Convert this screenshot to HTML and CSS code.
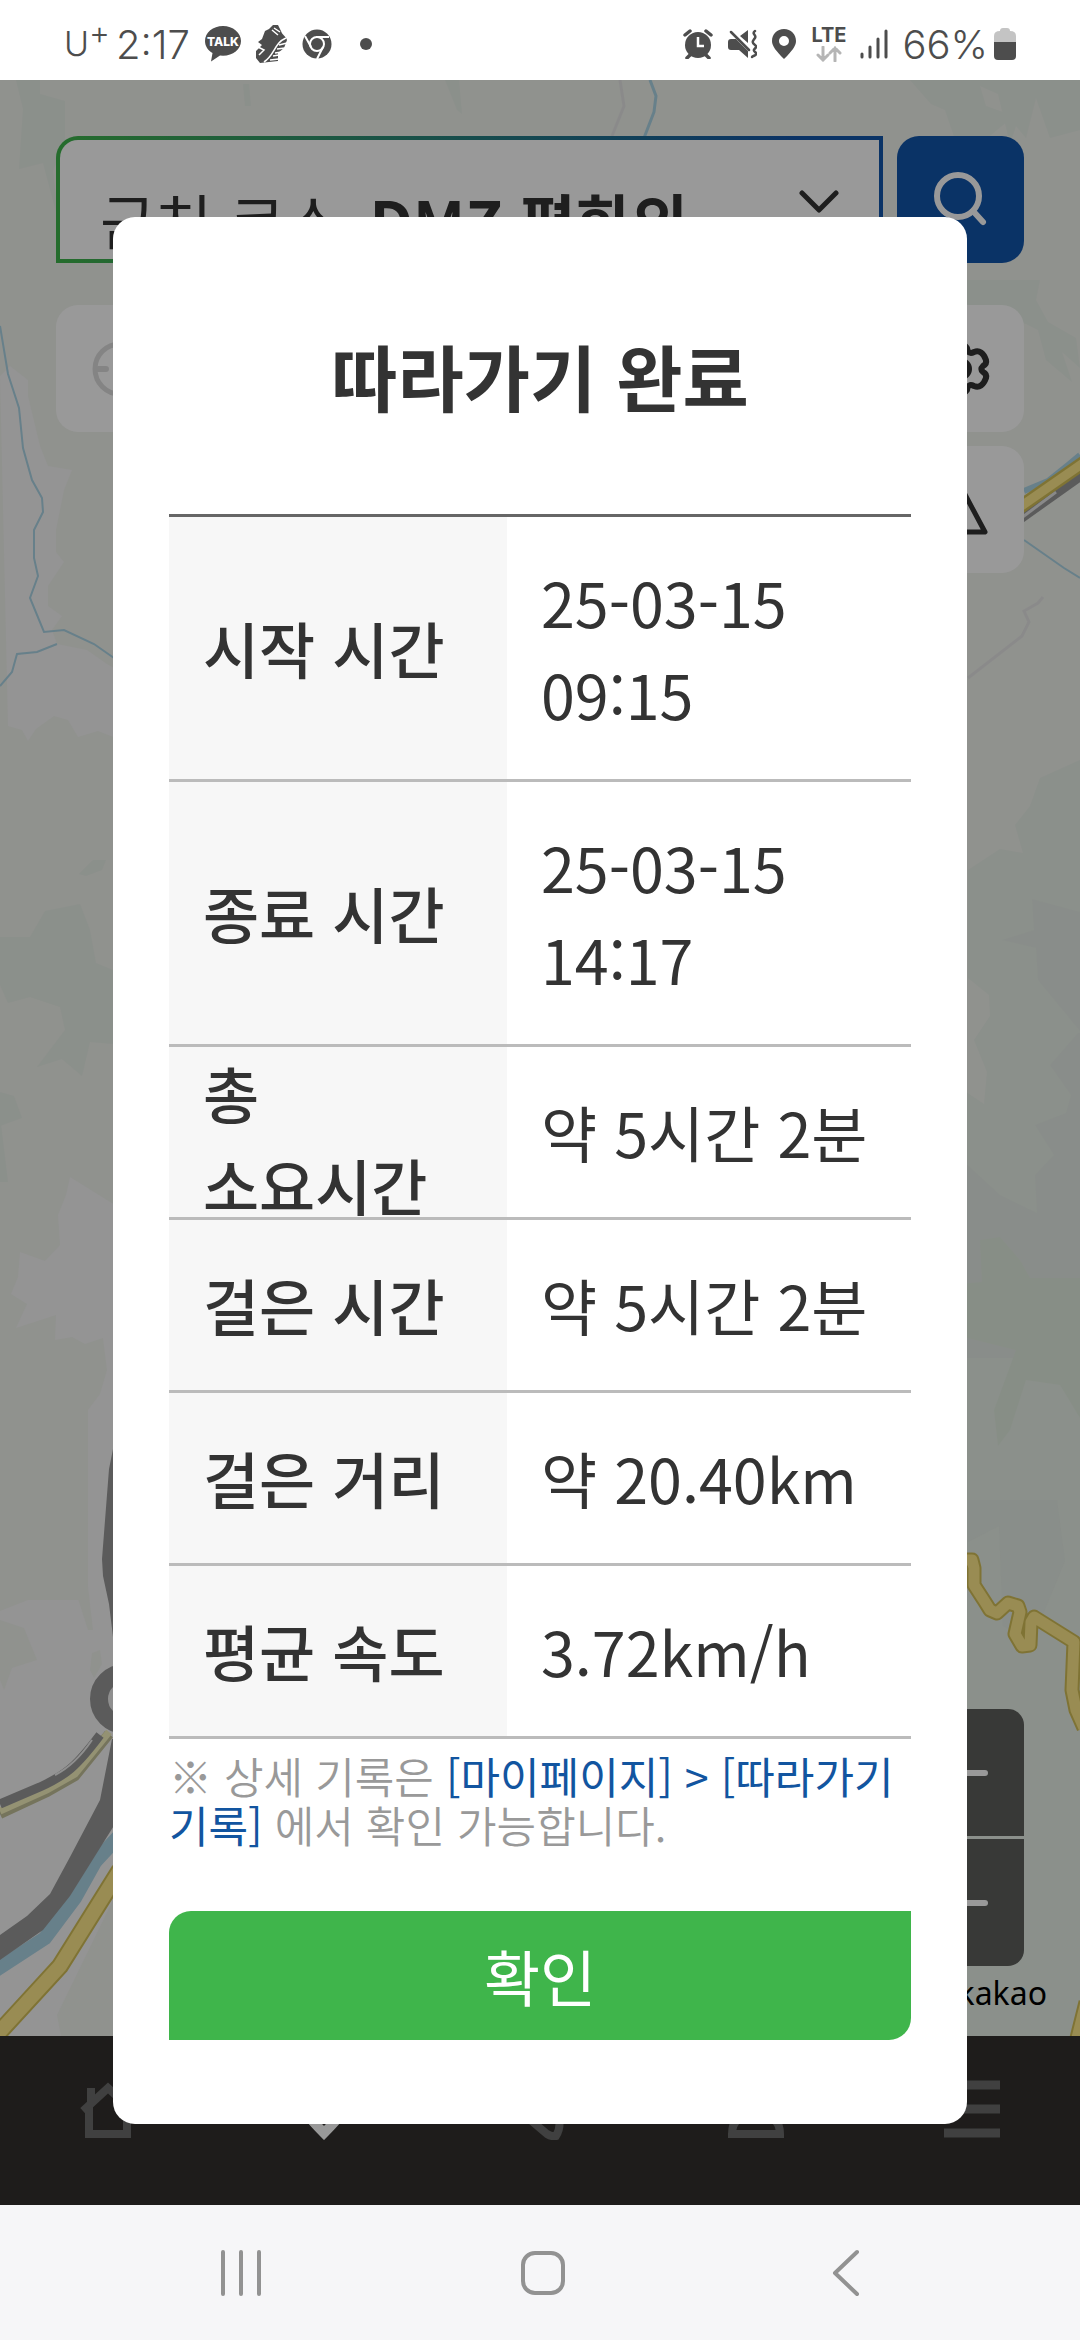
FILE: index.html
```html
<!DOCTYPE html>
<html lang="ko">

<head>
    <meta charset="UTF-8">
    <meta name="viewport" content="width=device-width, initial-scale=1.0">
    <title>따라가기 완료</title>
    <link rel="stylesheet" href="styles.css">
</head>

<body>
    <header class="status-bar">
        <div class="status-left">
            <span class="carrier">U<sup>+</sup></span>
            <span class="clock">2:17</span>
            <svg viewBox="0 0 38 38" width="38" height="38">
                <path d="M19 1C9 1 1 7.500 1 16c0 5 3 9.500 7.500 12L7 36.500 16 30.500l3 .2c10 0 18-6.500 18-14.700S29 1 19 1z" fill="#4d4d4d" />
                <text class="talk-text" x="19" y="21" text-anchor="middle">TALK</text>
            </svg>
            <svg viewBox="0 0 32 40" width="32" height="40">
                <path d="M13 5l4-4 5 0 3 6c1 4 5 5 6 9l-3 8-6 5 0 8-18 2-4-5 0-7 6-6-4-3 4-3 3-8z" fill="#4d4d4d" />
                <path d="M30 14c-12 5-11 17-22 24M23 21l8-2M21 25l8-1M19 29l7-1M17 32l6-1M14 36l9-1M16 6l6 5M18 4l6 4M2 23l6 3-5 5" stroke="#fff" stroke-width="1.500" fill="none" />
            </svg>
            <svg viewBox="0 0 30 30" width="30" height="30">
                <circle cx="15" cy="15" r="14.500" fill="#4d4d4d" />
                <circle cx="15" cy="15" r="7" fill="#4d4d4d" stroke="#fff" stroke-width="2" />
                <path d="M14 8h13M9 18L3 7M21 18l-6 12" stroke="#fff" stroke-width="2" fill="none" />
            </svg>
            <span class="more-dot"></span>
        </div>
        <div class="status-right">
            <svg viewBox="0 0 30 30" width="30" height="30">
                <circle cx="15" cy="16" r="13" fill="#4d4d4d" />
                <path d="M2 6l5-4M28 6l-5-4M4 29l4-4M26 29l-4-4" stroke="#4d4d4d" stroke-width="3.500" stroke-linecap="round" />
                <path d="M15 8v9h6" stroke="#fff" stroke-width="2.500" fill="none" />
            </svg>
            <svg viewBox="0 0 30 30" width="30" height="30">
                <path d="M1 13q0-3 3-3h5l12 12v7l-9-8H4q-3 0-3-3zM13 7l8-6v13z" fill="#4d4d4d" />
                <path d="M4 3l18 18M28 2c-4 3 2 4 0 7s-4 4 0 7-4 4 0 7-3 4-3 5" stroke="#4d4d4d" stroke-width="2.500" fill="none" stroke-linecap="round" />
            </svg>
            <svg viewBox="0 0 26 32" width="26" height="32">
                <path d="M13 1C6 1 1 6 1 13c0 5 4 10 12 18 8-8 12-13 12-18C25 6 20 1 13 1zm0 7a5 5 0 1 1 0 10 5 5 0 0 1 0-10z" fill="#4d4d4d" fill-rule="evenodd" />
            </svg>
            <div class="network">
                <span>LTE</span>
                <svg viewBox="0 0 26 16" width="26" height="16">
                    <path d="M7 1v13M2 9l5 5 5-5M19 15V2M14 7l5-5 5 5" stroke="#b5b5b5" stroke-width="3" fill="none" stroke-linecap="round" />
                </svg>
            </div>
            <svg viewBox="0 0 28 30" width="28" height="30">
                <path d="M2 25v3M10 18v10M18 10v18M26 2v26" stroke="#4d4d4d" stroke-width="3" stroke-linecap="round" />
            </svg>
            <div class="battery">
                <span>66%</span>
                <svg viewBox="0 0 22 32" width="22" height="32">
                    <path d="M6 3q0-3 3-3h4q3 0 3 3 6 0 6 5v7H0V8q0-5 6-5z" fill="#c4c4c4" />
                    <path d="M0 14h22v14q0 4-4 4H4q-4 0-4-4z" fill="#4d4d4d" />
                </svg>
            </div>
        </div>
    </header>

    <main class="app">
        <section class="map-view">
            <svg class="map" viewBox="0 80 1080 1956" preserveAspectRatio="xMidYMid slice">
                <rect y="80" width="1080" height="1956" fill="#f0f3ed" />
                <!-- Flat land -->
                <g fill="#f7f7f7">
                    <path d="M0 376l10-10 18 14v16l12 50 8 20 24 4-8 20-8 40 0 22 8 10-16 24 0 20 14 10-10 14 5 14 30 6 20 14 14 8V740l-23-9-20 6-10-17-14-4-18 13-8 12-6-11-14-4z" />
                    <path d="M70 1177l-4 18-8 20 2 30-15 16-25-9-2 25-7 17 16 10-11 24 40-13-1 25 17-3 13 7 18-6 4 32-7 24-12 16v626h60V1230l-25-20z" />
                    <path d="M0 1600h100v436H0z" />
                </g>
                <path d="M0 1395h88v115l-2 60 7 60h-5l-16-50-14-78-30-9 5 25-5 22 3 30-3 30-28 11zM0 1620l24 8 13 32-25 8-8 22-4-10zM113 1900l-56 115 4 21h60zM92 1653l8-3 2 14-8 14-4-8z" fill="#f0f3ed" />
                <!-- Forest -->
                <g fill="#e8f0e8">
                    <path d="M16 80h24v14l25 7 0 40-12 30 6 52-16-60-24 6 4-60zM243 84l6 0 2 22-6 0zM445 80l12 30 5 4-3-34zM910 80h170v50l-30 8-14-40-10 40-10-12-6 18-12-50-18-8 6 20 28 10-34 28-20 10-15-44-14-6z" />
                    <path d="M960 280h80l-4 20 12 22 28 16 4 30-18-16 10 30-26-22-8-30-12-6-60-20z" />
                    <path d="M0 937h30l15-26 35-7 10 26 6 33 17 7v74l-23-2-8 34-20-17-25 8 28-37-5-23-30-10-22 6-8-18zM79 874l14-14 13 0-4 10-16 6zM0 1092l14 4 8 22-22 8v-10l8 66-8 0z" />
                    <path d="M1080 760l-40 18-10 28-15 19 8 28-23-4-32 21v108l21 17 1 21-16 24 13 32-3 32-24-16v948h120z" />
                </g>
                <path d="M1032 899l48 13v119l-42-51-2-32-34-8 32-10zM1078 1033l-28 32 21 30-5 18-31 12 19 30-19 20 2 38-37-18-40-37v200h120v-325z" fill="#e5ece6" />
                <path d="M982 1282l-2-42 20-3 20 23 10 18h50v140l-20-33-34-5-16 50-12 16-4-36 22-60-56-14v-52z" fill="#e2ede0" />
                <path d="M968 1542l31-16 4 100 29 15 33-80-8-61h-89z" fill="#e2e9e3" opacity=".5" />
                <!-- Streams -->
                <g fill="none" stroke="#acd5e6" stroke-width="2">
                    <path d="M0 326l8 48 11 34 4 40 9 32 10 18 1 14-9 18 0 28 4 18-8 22 14 34 20-2 30 14 20 14" />
                    <path d="M0 686l12-14 5-18 20-2 20-8" />
                    <path d="M650 80l6 16-2 16-10 26" stroke-width="3" />
                    <path d="M1024 540l40 28 16 10" />
                    <path d="M1024 491l24-10 20-16 12-10" stroke-width="6" />
                </g>
                <path d="M620 80l4 26-12 30M968 678l54-42 7-14-5-11 14-8 5-6" fill="none" stroke="#e7e7e7" stroke-width="3" />
                <!-- Roads, right side -->
                <path d="M1010 524l76-54" stroke="#989898" stroke-width="13" />
                <path d="M1016 522l40-30" stroke="#e4e4e4" stroke-width="3" />
                <path d="M1010 514l76-53" stroke="#d4c058" stroke-width="14" />
                <path d="M1010 514l76-53" stroke="#ffe98a" stroke-width="9" />
                <path d="M960 1560h12l2 8v17l11 17 5 8 7 3 11-10 10 3 2 6-5 22 7 12 8-1 1-23 3-5 40 25-2 48 4 20 8 18M1076 2042l10-40" fill="none" stroke="#d4c058" stroke-width="15" stroke-linejoin="round" />
                <path d="M960 1560h12l2 8v17l11 17 5 8 7 3 11-10 10 3 2 6-5 22 7 12 8-1 1-23 3-5 40 25-2 48 4 20 8 18M1076 2042l10-40" fill="none" stroke="#ffe98a" stroke-width="11" stroke-linejoin="round" />
                <!-- Roads, left side -->
                <path d="M-4 1970l49-32 30-40 20-36 24-26" fill="none" stroke="#acd5e6" stroke-width="14" />
                <path d="M120 1430l-7 19-4 20-7 90 1 17 6 28 4 33v102l-1 0-12 61-30 57-20 37-23 22-27 19v25l43-30 27-34 50-80v-386z" fill="#989898" />
                <path d="M0 1814l47-22 28-16 34-42" fill="none" stroke="#c4c19a" stroke-width="10" />
                <path d="M0 1811l47-21 28-16 34-42" fill="none" stroke="#f7f4c0" stroke-width="7" />
                <path d="M0 1804l40-17c26-12 36-20 60-52" fill="none" stroke="#989898" stroke-width="9" />
                <path d="M55 1775q20-10 37-35" fill="none" stroke="#eee" stroke-width="2" />
                <circle cx="125" cy="1699" r="26" fill="#eee" stroke="#989898" stroke-width="18" />
                <path d="M-6 2038l66-72 60-96" fill="none" stroke="#d4c058" stroke-width="18" />
                <path d="M-6 2038l66-72 60-96" fill="none" stroke="#ffe98a" stroke-width="14" />
            </svg>

            <div class="controls">
                <div class="search-row">
                    <div class="course-box">
                        <label class="course-label" for="course">근처 코스</label>
                        <select class="course-select" id="course">
                            <option>DMZ 평화의</option>
                        </select>
                        <svg class="chevron" viewBox="0 0 40 24" width="40" height="24">
                            <path d="M3 3l17 17L37 3" stroke="#333" stroke-width="5" fill="none" stroke-linecap="round" stroke-linejoin="round" />
                        </svg>
                    </div>
                    <button class="square search-button" aria-label="검색">
                        <svg viewBox="0 0 60 60" width="60" height="60">
                            <circle cx="27" cy="26" r="21" fill="none" stroke="#fff" stroke-width="6" />
                            <path d="M42 41l10 11" stroke="#fff" stroke-width="6" stroke-linecap="round" />
                        </svg>
                    </button>
                </div>
                <div class="tool-row">
                    <button class="square" aria-label="현재 위치" disabled>
                        <svg viewBox="0 0 60 60" width="60" height="60">
                            <circle cx="30" cy="30" r="25" fill="none" stroke="#ddd" stroke-width="5" />
                            <path d="M8 30h8M44 30h8M30 8v8M30 44v8" stroke="#ddd" stroke-width="6" stroke-linecap="round" />
                        </svg>
                    </button>
                    <button class="square" aria-label="설정">
                        <svg viewBox="0 0 60 60" width="60" height="60">
                            <path d="M24 9q6-8 12 0 1 7 7 4 8-3 12 8 1 4-3 6-3 3 0 6 4 2 3 6-4 11-12 8-6-3-7 4-6 8-12 0-1-7-7-4-8 3-12-8-1-4 3-6 3-3 0-6-4-2-3-6 4-11 12-8 6 3 7-4z" fill="none" stroke="#333" stroke-width="6" stroke-linejoin="round" />
                            <circle cx="30" cy="30" r="8" fill="none" stroke="#333" stroke-width="6" />
                        </svg>
                    </button>
                </div>
                <button class="square warning-button" aria-label="위험 신고">
                    <svg viewBox="0 0 60 60" width="60" height="60">
                        <path d="M30 7L54 52H6z" fill="none" stroke="#333" stroke-width="5" stroke-linejoin="round" />
                        <path d="M30 22v14M30 43v1" stroke="#333" stroke-width="5" stroke-linecap="round" />
                    </svg>
                </button>
                <div class="zoom">
                    <button class="zoom-button" aria-label="확대">
                        <svg viewBox="0 0 54 54" width="54" height="54">
                            <path d="M3 27h48M27 3v48" stroke="#fff" stroke-width="6" stroke-linecap="round" />
                        </svg>
                    </button>
                    <button class="zoom-button" aria-label="축소">
                        <svg viewBox="0 0 54 54" width="54" height="54">
                            <path d="M3 27h48" stroke="#fff" stroke-width="6" stroke-linecap="round" />
                        </svg>
                    </button>
                </div>
            </div>
            <div class="copyright">kakao</div>
        </section>

        <nav class="tab-bar">
            <a class="tab" href="#" aria-label="홈">
                <svg viewBox="0 0 60 60" width="60" height="60">
                    <path d="M11 26v28h38V26M5 31L30 8l25 23M13 25V8" fill="none" stroke="#6b6b6b" stroke-width="8" />
                </svg>
            </a>
            <a class="tab" href="#" aria-label="지도">
                <svg viewBox="0 0 60 60" width="60" height="60">
                    <path d="M30 53C16 39 9 31 9 21a21 17 0 0 1 42 0c0 10-7 18-21 32z" fill="none" stroke="#fff" stroke-width="10" />
                </svg>
            </a>
            <a class="tab" href="#" aria-label="기록">
                <svg viewBox="0 0 60 60" width="60" height="60">
                    <path d="M4 26L37 54q5 3 9 2 5-8 3-18L20 10z" fill="none" stroke="#6b6b6b" stroke-width="8" />
                </svg>
            </a>
            <a class="tab" href="#" aria-label="마이페이지">
                <svg viewBox="0 0 60 60" width="60" height="60">
                    <circle cx="30" cy="15" r="11" fill="none" stroke="#6b6b6b" stroke-width="7" />
                    <path d="M6 54q0-20 24-20t24 20z" fill="none" stroke="#6b6b6b" stroke-width="8" />
                </svg>
            </a>
            <a class="tab" href="#" aria-label="메뉴">
                <svg viewBox="0 0 60 60" width="60" height="60">
                    <path d="M2 5h56M2 29h56M2 53h56" stroke="#6b6b6b" stroke-width="9" />
                </svg>
            </a>
        </nav>

        <div class="overlay">
            <div class="modal" role="dialog" aria-labelledby="modal-title">
                <h1 class="modal-title" id="modal-title">따라가기 완료</h1>
                <table class="record">
                    <tr>
                        <th scope="row"><div class="label">시작 시간</div></th>
                        <td>25-03-15 09:15</td>
                    </tr>
                    <tr>
                        <th scope="row"><div class="label">종료 시간</div></th>
                        <td>25-03-15 14:17</td>
                    </tr>
                    <tr>
                        <th scope="row"><div class="label">총 소요시간</div></th>
                        <td>약 5시간 2분</td>
                    </tr>
                    <tr>
                        <th scope="row"><div class="label">걸은 시간</div></th>
                        <td>약 5시간 2분</td>
                    </tr>
                    <tr>
                        <th scope="row"><div class="label">걸은 거리</div></th>
                        <td>약 20.40km</td>
                    </tr>
                    <tr>
                        <th scope="row"><div class="label">평균 속도</div></th>
                        <td>3.72km/h</td>
                    </tr>
                </table>
                <p class="note">※ 상세 기록은 <span class="path">[마이페이지] &gt; [따라가기 기록]</span> 에서 확인 가능합니다.</p>
                <button class="confirm">확인</button>
            </div>
        </div>
    </main>

    <footer class="system-bar">
        <button aria-label="최근 앱">
            <svg viewBox="0 0 44 48" width="44" height="48">
                <path d="M4 3v42M22 3v42M40 3v42" stroke="#929292" stroke-width="4" stroke-linecap="round" />
            </svg>
        </button>
        <button aria-label="홈 화면">
            <svg viewBox="0 0 48 48" width="48" height="48">
                <rect x="4" y="4" width="40" height="40" rx="12" fill="none" stroke="#929292" stroke-width="4" />
            </svg>
        </button>
        <button aria-label="뒤로">
            <svg viewBox="0 0 48 48" width="48" height="48">
                <path d="M36 3L14 24l22 21" fill="none" stroke="#929292" stroke-width="4" stroke-linecap="round" stroke-linejoin="round" />
            </svg>
        </button>
    </footer>
</body>

</html>
```
FILE: styles.css
```css
* {
    box-sizing: border-box;
}

body {
    margin: 0;
    min-height: 100vh;
    display: flex;
    flex-direction: column;
    font-family: "Noto Sans CJK KR", "Noto Sans", sans-serif;
    color: #333;
}

svg {
    display: block;
}

button {
    border: none;
    padding: 0;
    font-family: inherit;
    cursor: pointer;
}

/* Status bar */
.status-bar {
    height: 80px;
    padding: 8px 64px 0;
    display: flex;
    justify-content: space-between;
    align-items: center;
    background-color: #fff;
    color: #4d4d4d;
    font-family: Inter, Roboto, sans-serif;
    font-size: 40px;
    font-weight: 300;
}

.status-left,
.status-right {
    display: flex;
    align-items: center;
    gap: 14px;
}

.carrier {
    margin-right: -8px;
    font-size: 34px;
    line-height: 40px;
}

.carrier sup {
    font-size: 32px;
    line-height: 0;
}

.talk-text {
    font-size: 12px;
    font-weight: 800;
    fill: #fff;
}

.more-dot {
    width: 12px;
    height: 12px;
    margin-left: 14px;
    border-radius: 50%;
    background-color: #4d4d4d;
}

.network {
    display: flex;
    flex-direction: column;
    align-items: center;
    gap: 2px;
    font-size: 20px;
    font-weight: 700;
    line-height: 18px;
}

.battery {
    display: flex;
    align-items: center;
    gap: 6px;
}

/* Map screen */
.app {
    position: relative;
    flex: 1;
    display: flex;
    flex-direction: column;
}

.map-view {
    position: relative;
    flex: 1;
    display: flex;
    flex-direction: column;
}

.map {
    position: absolute;
    inset: 0;
    width: 100%;
    height: 100%;
}

.controls {
    position: relative;
    flex: 1;
    display: flex;
    flex-direction: column;
    padding: 56px 56px 0;
}

.search-row {
    display: flex;
    gap: 14px;
    margin-bottom: 42px;
}

.course-box {
    position: relative;
    flex: 1;
    height: 127px;
    padding: 42px 40px 0;
    display: flex;
    gap: 28px;
    border: 4px solid transparent;
    border-radius: 22px 0 22px 0;
    background: linear-gradient(#fff, #fff) padding-box, linear-gradient(90deg, #3fb54b, #1255aa 90%) border-box;
    font-size: 61px;
    line-height: 76px;
}

.course-label {
    white-space: nowrap;
}

.course-select {
    flex: 1;
    height: 76px;
    padding: 0;
    appearance: none;
    border: none;
    background: none;
    color: #333;
    font-family: inherit;
    font-size: 61px;
    font-weight: 700;
    line-height: 76px;
}

.chevron {
    position: absolute;
    top: 50px;
    right: 40px;
    pointer-events: none;
}

.square {
    width: 127px;
    height: 127px;
    display: flex;
    justify-content: center;
    align-items: center;
    border-radius: 22px;
    background-color: #fff;
}

.search-button {
    background-color: #1255aa;
}

.tool-row {
    display: flex;
    justify-content: space-between;
    margin-bottom: 14px;
}

.warning-button {
    align-self: flex-end;
}

.zoom {
    align-self: flex-end;
    margin-top: auto;
    display: flex;
    flex-direction: column;
    gap: 3px;
    border-radius: 16px;
    overflow: hidden;
}

.zoom-button {
    width: 127px;
    height: 127px;
    display: flex;
    justify-content: center;
    align-items: center;
    background-color: rgba(50, 50, 48, 0.76);
}

.copyright {
    position: relative;
    padding: 4px 33px 21px;
    text-align: right;
    color: #000;
    font-family: "Noto Sans", sans-serif;
    font-size: 32px;
    line-height: 45px;
}

.tab-bar {
    height: 169px;
    padding-top: 44px;
    display: grid;
    grid-template-columns: repeat(5, 1fr);
    justify-items: center;
    background-color: #32302d;
}

/* Result dialog */
.overlay {
    position: absolute;
    inset: 0;
    padding: 137px 113px 0;
    background-color: rgba(0, 0, 0, 0.4);
}

.modal {
    padding: 98px 56px 84px;
    border-radius: 22px;
    background-color: #fff;
}

.modal-title {
    margin: 0 0 80px;
    text-align: center;
    font-size: 72px;
    font-weight: 700;
    line-height: 119px;
}

.record {
    width: 100%;
    table-layout: fixed;
    border-spacing: 0;
    border-top: 3px solid #666;
    font-size: 61px;
    line-height: 92px;
    text-align: left;
    word-break: keep-all;
}

.record th,
.record td {
    height: 173px;
    padding: 39px 34px;
    border-bottom: 3px solid #bbb;
    vertical-align: middle;
}

.record th {
    width: 338px;
    padding: 0 34px;
    background-color: #f7f7f7;
    font-weight: 500;
}

/* Centred in the row, a two-line label starts at its top edge */
.label {
    height: 170px;
    display: flex;
    align-items: safe center;
}

.note {
    margin: 12px 0 62px;
    color: #999;
    font-size: 43px;
    font-weight: 350;
    line-height: 49px;
}

.path {
    color: #1255a0;
    font-weight: 400;
}

.confirm {
    display: block;
    width: 100%;
    height: 129px;
    border-radius: 22px 0 22px 0;
    background-color: #3fb54b;
    color: #fff;
    font-size: 61px;
}

/* Android navigation */
.system-bar {
    height: 135px;
    padding: 0 84px 0 90px;
    display: grid;
    grid-template-columns: repeat(3, 1fr);
    justify-items: center;
    align-items: center;
    background-color: #f6f6f8;
}

.system-bar button {
    background: none;
}
```
